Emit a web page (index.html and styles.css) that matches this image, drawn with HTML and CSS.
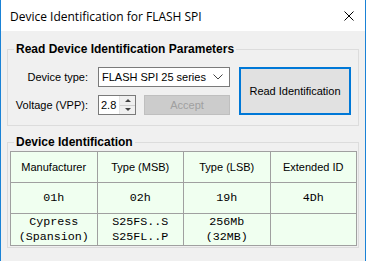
FILE: index.html
```html
<!DOCTYPE html>
<html lang="en">
<head>
  <meta charset="UTF-8" />
  <title>Device Identification for FLASH SPI</title>
  <link rel="stylesheet" href="styles.css">
</head>
<body>
  <div class="window">
    <div class="titlebar">
      <span class="title">Device Identification for FLASH SPI</span>
      <svg class="close" width="10" height="10" viewBox="0 0 10 10">
        <path d="M0.5 0.5 L9.5 9.5 M9.5 0.5 L0.5 9.5" stroke="#000" stroke-width="1" fill="none"/>
      </svg>
    </div>

    <div class="content">
      <fieldset class="group">
        <legend>Read Device Identification Parameters</legend>
        <div class="params">
          <label class="lbl">Device type:</label>
          <div class="combo">
            <span>FLASH SPI 25 series</span>
            <svg width="10" height="6" viewBox="0 0 10 6">
              <path d="M0.5 0.5 L5 5 L9.5 0.5" stroke="#444" stroke-width="1" fill="none"/>
            </svg>
          </div>
          <button type="button" class="read-btn">Read Identification</button>

          <label class="lbl">Voltage (VPP):</label>
          <div class="row2">
            <div class="spin">
              <span class="spin-value">2.8</span>
              <div class="spin-arrows">
                <div class="arrow up"></div>
                <div class="arrow down"></div>
              </div>
            </div>
            <button type="button" class="accept-btn" disabled>Accept</button>
          </div>
        </div>
      </fieldset>

      <fieldset class="group group-id">
        <legend>Device Identification</legend>
        <table class="id-table">
          <tr class="head">
            <td>Manufacturer</td>
            <td>Type (MSB)</td>
            <td>Type (LSB)</td>
            <td>Extended ID</td>
          </tr>
          <tr class="mono">
            <td>01h</td>
            <td>02h</td>
            <td>19h</td>
            <td>4Dh</td>
          </tr>
          <tr class="mono tall">
            <td>Cypress<br>(Spansion)</td>
            <td>S25FS..S<br>S25FL..P</td>
            <td>256Mb<br>(32MB)</td>
            <td></td>
          </tr>
        </table>
      </fieldset>
    </div>
  </div>
</body>
</html>
```

FILE: styles.css
```css
body {
  margin: 0;
  background: #ffffff;
  font-family: 'Liberation Sans', Arial, sans-serif;
  font-size: 11px;
  color: #000;
}
.window {
  width: 364px;
  height: 261px;
  border-left: 1px solid #1a82d6;
  border-right: 1px solid #1a82d6;
  background: #f0f0f0;
}
.titlebar {
  height: 31px;
  background: #ffffff;
  display: flex;
  align-items: center;
  justify-content: space-between;
  padding: 0 11px 0 9px;
}
.title {
  font-family: 'Open Sans', 'Noto Sans', sans-serif;
  font-size: 12px;
  padding-top: 1px;
}
.close {
  display: block;
}
.content {
  padding: 11px 6px 0 6px;
}
.group {
  width: 350px;
  margin: 0;
  padding: 0;
  border: 1px solid #dcdcdc;
}
.group legend {
  margin-left: 6px;
  padding: 0 2px;
  font-weight: bold;
  font-size: 12px;
  line-height: 15px;
}
.params {
  display: grid;
  grid-template-columns: 81px 132px 112px;
  grid-template-rows: 20px 20px;
  column-gap: 9px;
  row-gap: 8px;
  padding: 10px 0 10px 0;
  align-items: center;
}
.lbl {
  text-align: right;
  padding-right: 1px;
}
.combo {
  height: 20px;
  box-sizing: border-box;
  border: 1px solid #7a7a7a;
  background: #fff;
  display: flex;
  align-items: center;
  justify-content: space-between;
  padding: 0 6px 0 3px;
}
.read-btn {
  grid-row: 1 / 3;
  grid-column: 3;
  height: 48px;
  margin-left: 0;
  border: 2px solid #0078d7;
  background: #e1e1e1;
  font-family: inherit;
  font-size: 11px;
  color: #000;
  padding: 0;
}
.row2 {
  display: flex;
  gap: 8px;
  height: 20px;
}
.spin {
  width: 38px;
  box-sizing: border-box;
  border: 1px solid #7a7a7a;
  background: #fff;
  display: flex;
  align-items: center;
  justify-content: space-between;
}
.spin-value {
  padding-left: 2px;
}
.spin-arrows {
  width: 15px;
  height: 18px;
  display: flex;
  flex-direction: column;
  background: #f0f0f0;
  border-left: 1px solid #e3e3e3;
}
.arrow {
  flex: 1;
  display: flex;
  align-items: center;
  justify-content: center;
}
.arrow.up {
  border-bottom: 1px solid #d0d0d0;
}
.arrow.up::before {
  content: '';
  border-left: 3px solid transparent;
  border-right: 3px solid transparent;
  border-bottom: 3px solid #444;
}
.arrow.down::before {
  content: '';
  border-left: 3px solid transparent;
  border-right: 3px solid transparent;
  border-top: 3px solid #444;
}
.accept-btn {
  width: 86px;
  border: 1px solid #bfbfbf;
  background: #cccccc;
  color: #a0a0a0;
  font-family: inherit;
  font-size: 11px;
  padding: 0;
}
.group-id {
  margin-top: 9px;
}
.id-table {
  width: 347px;
  margin: 1px 0 1px 2px;
  border-collapse: collapse;
  background: #f0fff0;
  table-layout: fixed;
}
.id-table td {
  border: 1px solid #a0a0a0;
  text-align: center;
  height: 30px;
  padding: 0;
}
.id-table .mono td {
  font-family: 'Liberation Mono', 'Courier New', monospace;
  font-size: 11.7px;
  line-height: 15px;
}
.id-table .tall td {
  height: 31px;
}
```
